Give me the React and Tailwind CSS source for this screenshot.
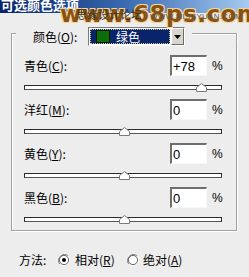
import React from "react";

const rows = [
  { label: "青色", key: "C", value: "+78", v: 78 },
  { label: "洋红", key: "M", value: "0", v: 0 },
  { label: "黄色", key: "Y", value: "0", v: 0 },
  { label: "黑色", key: "B", value: "0", v: 0 },
];

function Thumb() {
  return (
    <svg width="11" height="9" viewBox="0 0 11 9">
      <path d="M5.5 0.5 L10.5 4.5 L10.5 8.5 L0.5 8.5 L0.5 4.5 Z" fill="#fff" stroke="#7a7a7a" strokeWidth="1" />
    </svg>
  );
}

function Radio({ checked }) {
  return (
    <svg width="12" height="12" viewBox="0 0 12 12">
      <path d="M10.2 1.8 A6 6 0 0 0 1.8 10.2" fill="none" stroke="#8a8a8a" strokeWidth="1" />
      <path d="M1.8 10.2 A6 6 0 0 0 10.2 1.8" fill="none" stroke="#ffffff" strokeWidth="1" />
      <circle cx="6" cy="6" r="4.6" fill="#fff" stroke="#404040" strokeWidth="0.8" />
      {checked && <circle cx="6" cy="6" r="2" fill="#000" />}
    </svg>
  );
}

function Row({ r }) {
  const left = 99 + (r.v / 100) * 99 - 5.5;
  return (
    <div className="h-[44px] flex flex-col">
      <div className="flex items-center h-[21px] pl-[12px] pr-[13px]">
        <span className="text-[12px] leading-[21px] text-black">
          {r.label}(<span className="underline underline-offset-1">{r.key}</span>):
        </span>
        <div className="ml-auto w-[37px] h-[21px] bg-white border-t-2 border-l-2 border-t-[#6f6f6f] border-l-[#6f6f6f] border-b border-r border-b-[#f8f8f8] border-r-[#f8f8f8] flex items-center pl-[1px]">
          <span className="font-['Liberation_Sans'] text-[13px] leading-none text-black">{r.value}</span>
        </div>
        <span className="ml-[5px] w-[11px] font-['Liberation_Sans'] text-[12px] leading-none text-black">%</span>
      </div>
      <div className="mt-[6px] h-[10px] pl-[12px] pr-[14px] flex items-center">
        <div className="relative w-full h-[5px] bg-white border border-[#2a2a2a] border-b-[#555]">
          <div className="absolute top-[-3px]" style={{ left: `${left}px` }}>
            <Thumb />
          </div>
        </div>
      </div>
    </div>
  );
}

export default function App() {
  return (
    <div className="relative w-[249px] h-[277px] overflow-hidden bg-[#ededed] font-['Noto_Sans_CJK_SC',sans-serif] text-black">
      {/* title bar */}
      <div className="h-[13px] bg-gradient-to-r from-[#0a246a] via-[#3a6ab0] to-[#a6caf0] overflow-hidden">
        <div className="-mt-[3px] pl-[1px] text-[13px] leading-[16px] font-bold text-white">可选颜色选项</div>
      </div>

      {/* group box */}
      <div className="ml-[11px] mt-[14px] w-[226px]">
        <div className="flex h-[19px] items-start">
          <div className="w-[5px] h-[13px] mt-[6px] border-l border-t border-[#a0a0a0] shadow-[inset_1px_1px_0_#fff]" />
          <div className="ml-[17px] w-[55px] text-[12px] leading-[19px]">
            颜色(<span className="underline underline-offset-1">O</span>):
          </div>
          <div className="w-[97px] h-[19px] flex bg-white border border-t-[#7a7a7a] border-l-[#7a7a7a] border-b-[#fff] border-r-[#fff]">
            <div className="flex-1 m-[1px] bg-[#0a246a] border border-dotted border-[#c8c8a0] flex items-center">
              <div className="ml-[5px] w-[14px] h-[13px] bg-[#0b6e0b] border border-[#001800]" />
              <span className="ml-[6px] text-[12px] leading-none text-white">绿色</span>
            </div>
            <div className="w-[13px] h-full bg-[#d8d5cc] border border-t-[#fff] border-l-[#fff] border-b-[#6a6a6a] border-r-[#6a6a6a] flex items-center justify-center">
              <svg width="7" height="4" viewBox="0 0 7 4">
                <path d="M0 0 L7 0 L3.5 4 Z" fill="#000" />
              </svg>
            </div>
          </div>
          <div className="w-[7px]" />
          <div className="flex-1 h-[13px] mt-[6px] border-t border-r border-[#a0a0a0] shadow-[inset_0_1px_0_#fff,1px_0_0_#fff]" />
        </div>
        <div className="h-[185px] pt-[9px] border-l border-r border-b border-[#a0a0a0] shadow-[inset_1px_0_0_#fff,1px_1px_0_#fff]">
          {rows.map((r) => (
            <Row key={r.key} r={r} />
          ))}
        </div>
      </div>

      {/* method */}
      <div className="mt-[23px] pl-[19px] flex items-center h-[12px] text-[12px] leading-none">
        <span className="w-[39px]">方法:</span>
        <Radio checked />
        <span className="ml-[5px] w-[52px]">
          相对(<span className="underline underline-offset-1">R</span>)
        </span>
        <Radio />
        <span className="ml-[4px]">
          绝对(<span className="underline underline-offset-1">A</span>)
        </span>
      </div>

      {/* watermark */}
      <div className="absolute left-[60px] top-[1px] pointer-events-none">
        <div className="font-['DejaVu_Sans'] font-bold text-[23px] leading-[26px] tracking-[0.5px] text-[#8a5212] [text-shadow:1px_1px_0_#f2d49a,-1px_-1px_0_#f2d49a,1px_-1px_0_#f2d49a,-1px_1px_0_#f2d49a]">
          www.68ps.com
        </div>
      </div>
      <div className="absolute left-[76px] top-[8px] text-[11px] leading-[12px] text-[#3a3020] pointer-events-none">
        思缘设计论坛
      </div>
      <div className="absolute left-[150px] top-[13px] font-['Liberation_Sans'] text-[8px] leading-[8px] tracking-[0.3px] text-[#555] pointer-events-none">
        WWW.MISSYUAN.COM
      </div>
    </div>
  );
}
